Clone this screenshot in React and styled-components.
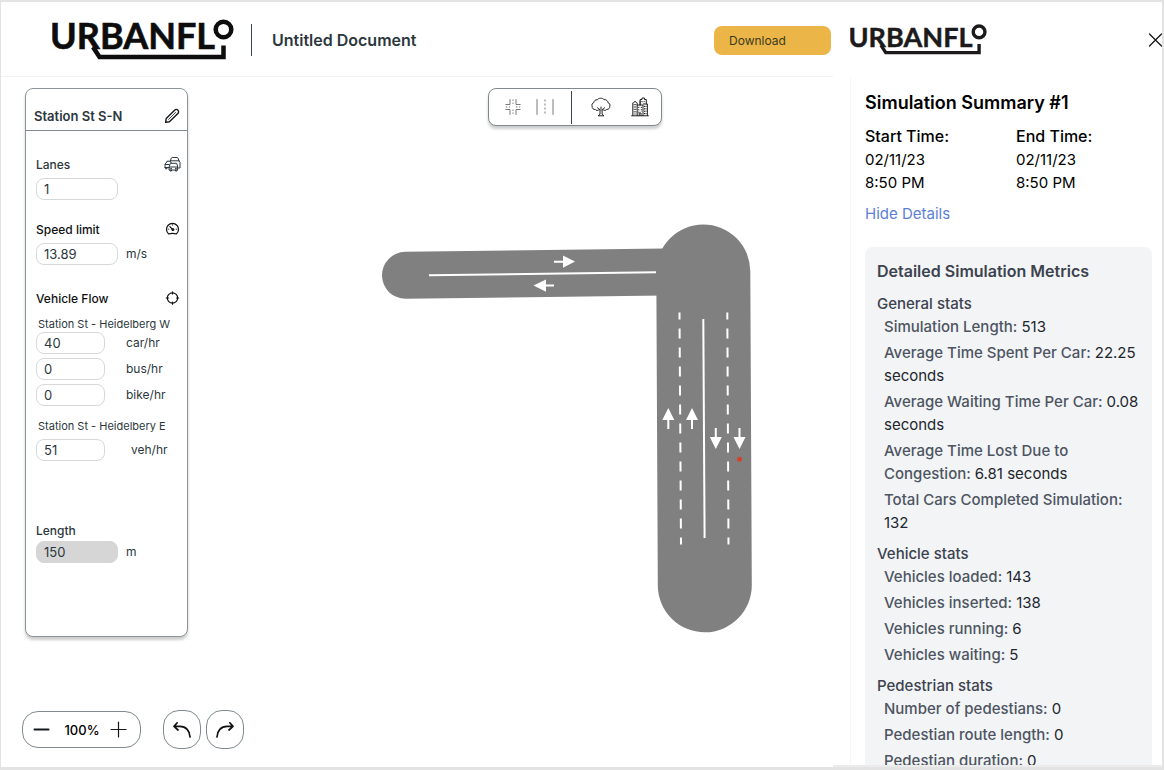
import React from "react";
import styled, { createGlobalStyle } from "styled-components";

const Global = createGlobalStyle`
  *, *::before, *::after { box-sizing: border-box; }
  html, body { margin: 0; background: #e3e3e3; }
  body { font-family: Inter, "Liberation Sans", sans-serif; color: #000; }
  button, input { font: inherit; color: inherit; }
  h1, h2, h3, p, dl, dd, ul { margin: 0; padding: 0; }
`;

const Page = styled.div`
  display: grid;
  grid-template-columns: minmax(0, 1fr) 329px;
  height: 100vh;
  padding: 2px 2px 3px 1px;
`;

const Workspace = styled.main`
  display: flex;
  flex-direction: column;
  min-width: 0;
  background: #fff;
`;

const Header = styled.header`
  display: flex;
  align-items: center;
  height: 75px;
  flex: none;
  padding: 2px 2px 0 51px;
  border-bottom: 1px solid #f3f3f3;
`;

const LogoSvg = styled.svg`
  display: block;
  flex: none;
  width: ${(p) => p.$width}px;
  height: auto;
  color: ${(p) => p.$tone};
  font-family: Lato, sans-serif;
  font-weight: 700;
  font-size: 36px;
`;

const HeaderRule = styled.span`
  width: 1px;
  height: 32px;
  margin: 0 20px 0 17px;
  background: #3a474c;
`;

const DocTitle = styled.h1`
  flex: 1;
  font-size: 16px;
  line-height: 24px;
  font-weight: 600;
  color: #2c373d;
`;

const DownloadButton = styled.button`
  width: 117px;
  height: 29px;
  padding: 0 15px;
  border: 0;
  border-radius: 8px;
  background: #ebb548;
  color: #3b3a1c;
  font-size: 12px;
  text-align: left;
`;

const Stage = styled.div`
  display: grid;
  grid-template-columns: 163px minmax(0, 1fr);
  flex: 1;
  min-height: 0;
  align-items: start;
  padding: 11px 0 0 24px;
`;

const Panel = styled.form`
  padding-bottom: 73px;
  border: 1px solid #8b9599;
  border-radius: 8px;
  background: #fff;
  box-shadow: 0 3px 3px rgba(0, 0, 0, 0.2);
  color: #2c373d;
  font-size: 12px;
`;

const PanelHead = styled.div`
  display: flex;
  align-items: center;
  justify-content: space-between;
  height: 42px;
  padding: 12px 7px 0 8px;
  border-bottom: 1px solid #7f8a8e;
`;

const PanelTitle = styled.h2`
  font-size: 13px;
  line-height: 18px;
  font-weight: 600;
`;

const IconButton = styled.button`
  display: flex;
  padding: 0;
  border: 0;
  background: none;
  color: #15181a;
`;

const Group = styled.section`
  padding: ${(p) => p.$top}px 6px 0 10px;
`;

const GroupHead = styled.div`
  display: flex;
  align-items: center;
  justify-content: space-between;
  height: 18px;
  color: ${(p) => (p.$strong ? "#111" : "#2c373d")};
  font-weight: 500;
  margin-bottom: ${(p) => p.$gap || 5}px;
`;

const FlowName = styled.p`
  margin-bottom: ${(p) => p.$gap || 0}px;
  padding-left: 2px;
  font-size: 11px;
  line-height: 16px;
  white-space: nowrap;
`;

const FieldRow = styled.div`
  display: flex;
  align-items: center;
  height: 22px;
  margin-bottom: ${(p) => p.$gap || 0}px;
`;

const Field = styled.input`
  width: ${(p) => (p.$short ? 69 : 82)}px;
  height: 22px;
  padding: 0 7px;
  border: 1px solid #d6d8d9;
  border-radius: 8px;
  background: #fff;
  font-size: 13px;
  &:read-only {
    border-color: #d6d6d6;
    background: #d6d6d6;
  }
`;

const Unit = styled.label`
  margin-left: ${(p) => p.$gap || 8}px;
  line-height: 16px;
`;

const CanvasArea = styled.div`
  display: flex;
  flex-direction: column;
  align-items: flex-start;
  min-width: 0;
`;

const Toolbar = styled.div`
  display: flex;
  align-items: center;
  width: 174px;
  height: 38px;
  margin-left: 300px;
  padding: 0 10px 0 13px;
  border: 1px solid #7f8a8e;
  border-radius: 8px;
  background: #fff;
  box-shadow: 0 3px 3px rgba(0, 0, 0, 0.2);
`;

const Tool = styled.button`
  display: flex;
  align-items: center;
  justify-content: center;
  width: 22px;
  height: 24px;
  margin-right: ${(p) => p.$gap || 0}px;
  padding: 0;
  border: 0;
  background: none;
  color: ${(p) => (p.$faint ? "#6b6b6b" : "#222")};
`;

const ToolRule = styled.span`
  width: 1px;
  height: 33px;
  margin-right: 18px;
  background: #3a474c;
`;

const RoadMap = styled.svg`
  display: block;
  width: 372px;
  height: 411px;
  margin: 97px 0 0 193px;
`;

const Footer = styled.footer`
  display: flex;
  align-items: center;
  flex: none;
  gap: 5px;
  padding: 0 21px 18px;
`;

const ZoomBox = styled.div`
  display: flex;
  align-items: center;
  justify-content: space-between;
  width: 119px;
  height: 37px;
  margin-right: 17px;
  padding: 0 13px 0 10px;
  border: 1px solid #7f8a8e;
  border-radius: 16px;
  font-size: 13px;
  font-weight: 500;
`;

const ZoomLevel = styled.span`
  padding-left: 4px;
`;

const RoundButton = styled.button`
  display: flex;
  align-items: center;
  justify-content: center;
  width: 38px;
  height: 39px;
  padding: 0;
  border: 1px solid #7f8a8e;
  border-radius: 16px;
  background: #fff;
  color: #111;
`;

const Sidebar = styled.aside`
  display: flex;
  flex-direction: column;
  min-height: 0;
  overflow: hidden;
  padding-left: 17px;
  background: #fff;
  border-bottom: 2px solid #ececec;
`;

const SideHead = styled.div`
  display: flex;
  align-items: center;
  justify-content: space-between;
  flex: none;
  height: 75px;
`;

const Summary = styled.section`
  flex: 1;
  min-height: 0;
  overflow: hidden;
  padding: 14px 10px 0 14px;
  border-left: 1px solid #f7f7f7;
  font-size: 15px;
  line-height: 23px;
`;

const SummaryTitle = styled.h2`
  font-size: 18px;
  line-height: 24px;
  font-weight: 600;
`;

const Times = styled.dl`
  display: grid;
  grid-template-columns: 151px 1fr;
  margin: 9px 0 8px;
`;

const TimeLabel = styled.dt`
  font-size: 16px;
  line-height: 24px;
  font-weight: 500;
`;

const DetailsLink = styled.a`
  color: #5b80d8;
  text-decoration: none;
`;

const Metrics = styled.div`
  margin-top: 22px;
  padding: 12px;
  border-radius: 8px;
  background: #f2f4f6;
  color: #3c424e;
`;

const MetricsTitle = styled.h3`
  margin-bottom: 9px;
  font-size: 16px;
  line-height: 24px;
  font-weight: 600;
`;

const StatTitle = styled.h3`
  font-size: 15px;
  line-height: 23px;
  font-weight: 500;
`;

const StatList = styled.ul`
  margin-bottom: 8px;
  padding-left: 7px;
  list-style: none;
`;

const Stat = styled.li`
  margin-bottom: 3px;
  color: #4e5461;
  font-weight: 500;
`;

const Value = styled.span`
  color: #22262e;
  font-weight: 400;
`;

const Svg = ({ w, h, box, children, sw = 1.5 }) => (
  <svg width={w} height={h} viewBox={box || `0 0 ${w} ${h}`} fill="none" stroke="currentColor" strokeWidth={sw} strokeLinecap="round" strokeLinejoin="round" aria-hidden="true">
    {children}
  </svg>
);

const Logo = ({ width, tone }) => (
  <LogoSvg viewBox="0 0 182 42" $width={width} $tone={tone} role="img" aria-label="Urbanflo">
    <text x="-2" y="30" fill="currentColor" stroke="currentColor" strokeWidth="0.6">URBANFL</text>
    <g fill="none" stroke="currentColor" strokeWidth="4.5">
      <circle cx="171.5" cy="10.5" r="7.8" />
      <path d="M41 28 L47.5 38 H171.5 V26.5" />
    </g>
  </LogoSvg>
);

const PencilIcon = () => (
  <Svg w={16} h={16} sw={1.4}>
    <path d="M1.6 14.4 L2.2 10.6 L10.6 2.2 A2.3 2.3 0 0 1 13.9 5.5 L5.4 13.8 Z" />
    <path d="M4.6 11.4 L11.6 4.4" strokeWidth="0.8" />
  </Svg>
);

const CarsIcon = () => (
  <Svg w={17} h={16} sw={1}>
    <path d="M6.4 5 L7.3 2.2 Q7.6 1.5 8.4 1.5 H13 Q13.8 1.5 14.1 2.2 L15 5 L16 6.3 V12 H14.4" />
    <path d="M7 4.8 H15" />
    <path d="M1 11.5 V8 L2 7.2 L3 5.2 H6.4 L7.2 7 M1 11.5 H5 M1.5 8.5 H5 M1.6 11.6 V12.8 H3 V11.6" />
    <path d="M5.4 10 L6.4 7.3 H12.6 L13.6 10 V14 H5.4 Z M5.4 11 H13.6 M6 14 V15 H7.6 V14 M11.4 14 V15 H13 V14 M6.6 12.4 H7.6 M11.4 12.4 H12.4" />
  </Svg>
);

const GaugeIcon = () => (
  <Svg w={17} h={14} box="-1.5 0 17 14" sw={1.2}>
    <path d="M3.2 12 A6 6 0 1 1 10.8 12 Q7 10.6 3.2 12 Z" />
    <path d="M4.4 4.6 L7.2 7.6" />
    <circle cx="7.4" cy="7.6" r="0.9" />
    <path d="M2.6 7.2 H3.4 M10.6 7.2 H11.4 M7 2.6 V3.2" strokeWidth="0.8" />
  </Svg>
);

const TargetIcon = () => (
  <Svg w={17} h={14} box="-1.5 0 17 14" sw={1.2}>
    <circle cx="7" cy="7" r="5.2" />
    <path d="M7 .8 V3 M7 11 V13.2 M.8 7 H3 M11 7 H13.2" />
  </Svg>
);

const CrossroadIcon = () => (
  <Svg w={16} h={18} sw={0.9}>
    <path d="M5 1.5 V6.5 H.8 M11 1.5 V6.5 H15.2 M5 16.5 V11.5 H.8 M11 16.5 V11.5 H15.2" />
    <path d="M8 1.5 V6.5 M8 11.5 V16.5 M.8 9 H5 M11 9 H15.2" strokeDasharray="1.4 1.6" strokeLinecap="butt" />
  </Svg>
);

const LanesIcon = () => (
  <Svg w={18} h={18} sw={0.9}>
    <path d="M1 1.5 V16.5 M17 1.5 V16.5" />
    <path d="M9 1.5 V16.5" strokeDasharray="2 2" strokeLinecap="butt" />
  </Svg>
);

const TreeIcon = () => (
  <Svg w={20} h={20} sw={1}>
    <path d="M8.3 12.5 C7 14 5 13.7 4.4 12.5 C2 12.6 .8 11 1.2 9.3 C.4 7.8 1.2 6 2.8 5.6 C3 3.6 4.6 2.6 6.3 2.8 C7.3 .9 11.4 .6 13 2.6 C15.2 2.4 16.8 3.8 16.9 5.6 C18.6 6.2 19.4 7.6 18.8 9.2 C19 11 17.8 12.5 15.7 12.4 C14.8 13.7 13 13.9 11.8 12.5" />
    <path d="M6.5 10.8 L9 13 V17.3 L7 18.8 H13 L11.1 17.3 V13 L13.6 10.8 M10 10 V13" />
  </Svg>
);

const BuildingsIcon = () => (
  <Svg w={18} h={20} sw={1}>
    <path d="M.6 18.8 H17.4 M1.8 18.6 V6 L3 4.8 H5 L6.2 6 V8 M6.2 18.6 V8 H12 V18.6 M9 8 V4 M9.2 7.8 V2.5 H11 V1 H13.5 V2.5 H15.3 V7 M12.2 7 H16.4 V18.6" />
    <path d="M3.2 7 V17.5 M4.8 7 V17.5 M7.8 9.8 V17 M10.3 9.8 V15 M13.5 8.8 V17.5 M15 8.8 V17.5 M11 4 V6.5 M13.2 4 V6.5" strokeDasharray="1.2 1.2" strokeLinecap="butt" />
    <path d="M8.2 18.6 V16 H10 V18.6" />
  </Svg>
);

const Roads = () => (
  <RoadMap viewBox="381 223 372 411" role="img" aria-label="Road layout">
    <g stroke="#808080" strokeLinecap="round" fill="none">
      <path d="M405.5 275.3 L703 271.5" strokeWidth="47" />
      <path d="M703.3 271.5 L704.8 585.3" strokeWidth="94" />
    </g>
    <g stroke="#fff" strokeWidth="2" fill="none">
      <path d="M429 275.3 L656 272.2" />
      <path d="M703.3 319 L704.6 538" />
      <path d="M679.5 312.5 L681 544.5" strokeDasharray="10 9" strokeDashoffset="3" />
      <path d="M727.3 312.5 L728.5 544.5" strokeDasharray="10 9" strokeDashoffset="3" />
    </g>
    <g stroke="#fff" strokeWidth="2">
      <path d="M554 261.8 H564 M544 285.6 H554 M668.3 429 V419 M692 429 V419 M715.8 428 V438 M739.5 428 V438" />
    </g>
    <g fill="#fff">
      <path d="M575 261.6 L563 255.5 V267.8 Z M533.5 285.6 L546 279.5 V291.8 Z" />
      <path d="M668.3 408 L674.3 420 H662.3 Z M692 408 L698 420 H686 Z" />
      <path d="M715.8 449 L721.8 437 H709.8 Z M739.5 449 L745.5 437 H733.5 Z" />
    </g>
    <circle cx="739.5" cy="459.3" r="2.5" fill="#d3422f" />
  </RoadMap>
);

const flows = [
  { id: "car", value: "40", unit: "car/hr" },
  { id: "bus", value: "0", unit: "bus/hr" },
  { id: "bike", value: "0", unit: "bike/hr" },
];

const stats = [
  {
    title: "General stats",
    items: [
      ["Simulation Length", "513"],
      ["Average Time Spent Per Car", "22.25 seconds"],
      ["Average Waiting Time Per Car", "0.08 seconds"],
      ["Average Time Lost Due to Congestion", "6.81 seconds"],
      ["Total Cars Completed Simulation", "132"],
    ],
  },
  {
    title: "Vehicle stats",
    items: [
      ["Vehicles loaded", "143"],
      ["Vehicles inserted", "138"],
      ["Vehicles running", "6"],
      ["Vehicles waiting", "5"],
    ],
  },
  {
    title: "Pedestrian stats",
    items: [
      ["Number of pedestians", "0"],
      ["Pedestian route length", "0"],
      ["Pedestian duration", "0"],
    ],
  },
];

export default function App() {
  return (
    <>
      <Global />
      <Page>
        <Workspace>
          <Header>
            <Logo width={182} tone="#0d0d0d" />
            <HeaderRule />
            <DocTitle>Untitled Document</DocTitle>
            <DownloadButton type="button">Download</DownloadButton>
          </Header>

          <Stage>
            <Panel>
              <PanelHead>
                <PanelTitle>Station St S-N</PanelTitle>
                <IconButton type="button" aria-label="Rename"><PencilIcon /></IconButton>
              </PanelHead>

              <Group $top={24}>
                <GroupHead><label htmlFor="lanes">Lanes</label><CarsIcon /></GroupHead>
                <FieldRow><Field id="lanes" defaultValue="1" /></FieldRow>
              </Group>

              <Group $top={20}>
                <GroupHead $strong><label htmlFor="speed">Speed limit</label><GaugeIcon /></GroupHead>
                <FieldRow>
                  <Field id="speed" defaultValue="13.89" />
                  <Unit htmlFor="speed">m/s</Unit>
                </FieldRow>
              </Group>

              <Group $top={24}>
                <GroupHead $strong $gap={9}><span>Vehicle Flow</span><TargetIcon /></GroupHead>
                <FlowName>Station St - Heidelberg W</FlowName>
                {flows.map((f) => (
                  <FieldRow key={f.id} $gap={4}>
                    <Field $short id={f.id} defaultValue={f.value} />
                    <Unit $gap={21} htmlFor={f.id}>{f.unit}</Unit>
                  </FieldRow>
                ))}
              </Group>

              <Group $top={8}>
                <FlowName $gap={5}>Station St - Heidelbery E</FlowName>
                <FieldRow>
                  <Field $short id="veh" defaultValue="51" />
                  <Unit $gap={26} htmlFor="veh">veh/hr</Unit>
                </FieldRow>
              </Group>

              <Group $top={60}>
                <GroupHead $gap={2}><label htmlFor="length">Length</label></GroupHead>
                <FieldRow>
                  <Field id="length" value="150" readOnly />
                  <Unit htmlFor="length">m</Unit>
                </FieldRow>
              </Group>
            </Panel>

            <CanvasArea>
              <Toolbar role="toolbar" aria-label="Map tools">
                <Tool type="button" $faint $gap={10} aria-label="Intersection"><CrossroadIcon /></Tool>
                <Tool type="button" $faint $gap={15} aria-label="Road"><LanesIcon /></Tool>
                <ToolRule />
                <Tool type="button" $gap={17} aria-label="Tree"><TreeIcon /></Tool>
                <Tool type="button" aria-label="Building"><BuildingsIcon /></Tool>
              </Toolbar>
              <Roads />
            </CanvasArea>
          </Stage>

          <Footer>
            <ZoomBox>
              <IconButton type="button" aria-label="Zoom out">
                <Svg w={17} h={17} sw={2}><path d="M1.5 8.5 H15.5" /></Svg>
              </IconButton>
              <ZoomLevel>100%</ZoomLevel>
              <IconButton type="button" aria-label="Zoom in">
                <Svg w={17} h={17} sw={1.2}><path d="M1 8.5 H16 M8.5 1 V16" /></Svg>
              </IconButton>
            </ZoomBox>
            <RoundButton type="button" aria-label="Undo">
              <Svg w={20} h={18} sw={1.7}><path d="M5.2 1.8 L2 5.4 L6 9 M2.4 5.4 H8 C14 5.4 17.8 9.8 18 16" /></Svg>
            </RoundButton>
            <RoundButton type="button" aria-label="Redo">
              <Svg w={20} h={18} sw={1.7}><path d="M14.8 1.8 L18 5.4 L14 9 M17.6 5.4 H12 C6 5.4 2.2 9.8 2 16" /></Svg>
            </RoundButton>
          </Footer>
        </Workspace>

        <Sidebar>
          <SideHead>
            <Logo width={137} tone="#1c1a1b" />
            <IconButton type="button" aria-label="Close">
              <Svg w={14} h={14} sw={1.3}><path d="M1.5 1 L13.5 13 M13.5 1 L1.5 13" /></Svg>
            </IconButton>
          </SideHead>
          <Summary>
            <SummaryTitle>Simulation Summary #1</SummaryTitle>
            <Times>
              <TimeLabel>Start Time:</TimeLabel>
              <TimeLabel>End Time:</TimeLabel>
              <dd>02/11/23<br />8:50 PM</dd>
              <dd>02/11/23<br />8:50 PM</dd>
            </Times>
            <DetailsLink href="#details">Hide Details</DetailsLink>
            <Metrics id="details">
              <MetricsTitle>Detailed Simulation Metrics</MetricsTitle>
              {stats.map((s) => (
                <React.Fragment key={s.title}>
                  <StatTitle>{s.title}</StatTitle>
                  <StatList>
                    {s.items.map(([k, v]) => (
                      <Stat key={k}>{k}: <Value>{v}</Value></Stat>
                    ))}
                  </StatList>
                </React.Fragment>
              ))}
            </Metrics>
          </Summary>
        </Sidebar>
      </Page>
    </>
  );
}
